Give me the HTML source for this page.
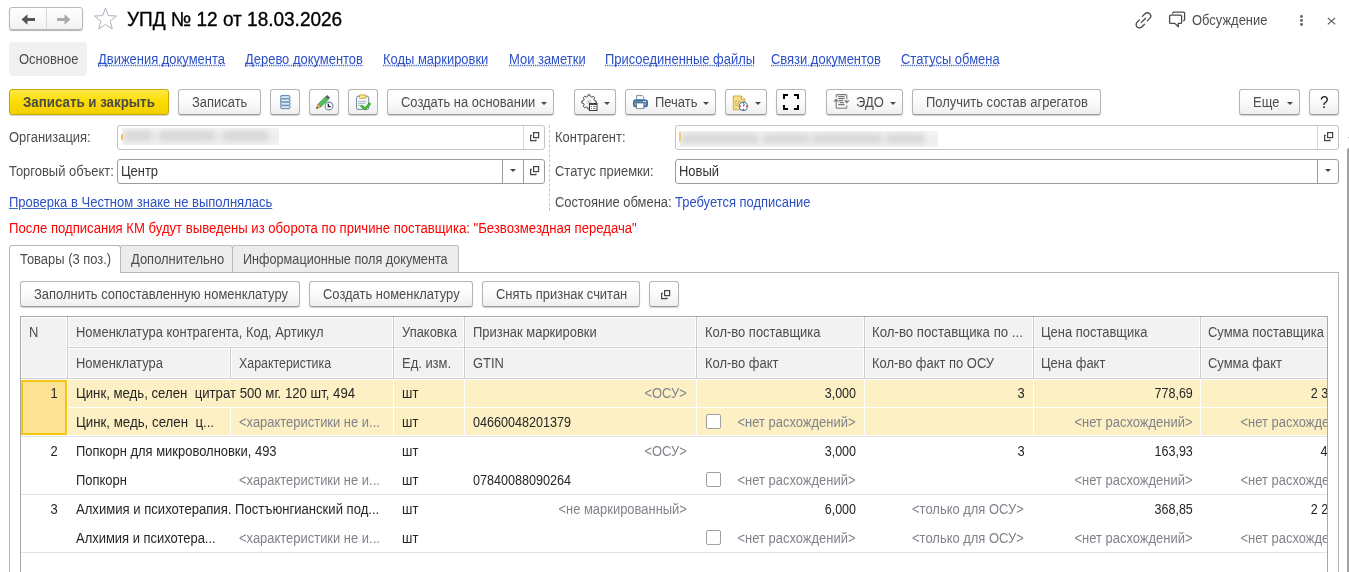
<!DOCTYPE html>
<html><head><meta charset="utf-8">
<style>
*{box-sizing:border-box;margin:0;padding:0}
html,body{width:1349px;height:572px;overflow:hidden;background:#fff}
body{position:relative;font-family:"Liberation Sans",sans-serif;font-size:13px;color:#4d4d4d}
.a{position:absolute;white-space:pre;font-size:14px;line-height:16px;transform:scaleX(.925);transform-origin:0 0}
.a.r{transform-origin:100% 0}
.btn{position:absolute;top:89px;height:26px;border:1px solid #b5b5b5;border-bottom-color:#9a9a9a;border-radius:3px;background:linear-gradient(#fff 0%,#fdfdfd 40%,#efefef 100%);box-shadow:0 1px 1px rgba(0,0,0,.18)}
.btn .t{position:absolute;top:4px;white-space:pre;font-size:14px;line-height:16px;transform:scaleX(.925);transform-origin:0 0;color:#4d4d4d}
.dd{position:absolute;width:0;height:0;border-left:3px solid transparent;border-right:3px solid transparent;border-top:3px solid #4d4d4d}
.lnk{color:#2c50c4;text-decoration:underline dotted;text-underline-offset:1px;text-decoration-skip-ink:none}
.inp{position:absolute;height:25px;border:1px solid #c4c4c4;border-radius:3px;background:#fff}
.inp.dk{border-color:#9c9c9c}
.vdiv{position:absolute;top:0;bottom:0;width:1px}
</style></head><body>

<!-- HEADER -->
<div style="position:absolute;left:9px;top:7px;width:74px;height:23px;border:1px solid #b8b8b8;border-radius:3px;background:linear-gradient(#fff,#f2f2f2);box-shadow:0 1px 1px rgba(0,0,0,.3)"></div>
<div style="position:absolute;left:46px;top:8px;width:1px;height:21px;background:#d6d6d6"></div>
<svg style="position:absolute;left:20px;top:13px" width="16" height="13" viewBox="0 0 16 13"><path d="M1.5 6.5 L7.5 1.2 V5 H15 V8 H7.5 V11.8 Z" fill="#555"/></svg>
<svg style="position:absolute;left:56px;top:13px" width="16" height="13" viewBox="0 0 16 13"><path d="M14.5 6.5 L8.5 1.2 V5 H1 V8 H8.5 V11.8 Z" fill="#aaa"/></svg>
<svg style="position:absolute;left:92px;top:7px" width="27" height="25" viewBox="0 0 27 25"><path d="M13.50 1.00 L16.38 8.64 L24.53 9.02 L18.16 14.11 L20.32 21.98 L13.50 17.50 L6.68 21.98 L8.84 14.11 L2.47 9.02 L10.62 8.64 Z" fill="none" stroke="#a9b1ba" stroke-width="1" stroke-linejoin="miter"/></svg>
<div class="a" style="left:127px;top:8px;font-size:20px;line-height:23px;color:#000;transform:scaleX(.95);-webkit-text-stroke:.35px #000">УПД № 12 от 18.03.2026</div>

<svg style="position:absolute;left:1132px;top:8px" width="58" height="24" viewBox="0 0 58 24"><g fill="none" stroke="#4a4a4a" stroke-width="1.3" stroke-linecap="round"><path d="M10.3 8.4 L13 5.7 A3.32 3.32 0 0 1 17.7 10.4 L15.2 12.9"/><path d="M12.5 16.3 L9.8 19 A3.32 3.32 0 0 1 5.1 14.3 L7.5 11.9"/><path d="M9.2 14.6 L13.6 10.2"/><path d="M37.6 8.2 Q37.6 7.2 38.6 7.2 H48.6 Q49.6 7.2 49.6 8.2 V14.4 Q49.6 15.4 48.6 15.4 H46.3 V18.8 L42.8 15.4 H38.6 Q37.6 15.4 37.6 14.4 Z" stroke-linejoin="round"/><path d="M40.6 5.3 Q41 4.2 42 4.2 H51.6 Q52.6 4.2 52.6 5.2 V11.4 Q52.6 12.4 51.6 12.6"/></g></svg>
<div class="a" style="left:1192px;top:12px;color:#4d4d4d">Обсуждение</div>
<div style="position:absolute;left:1300px;top:15.3px;width:2.8px;height:2.8px;border-radius:50%;background:#6a6a6a"></div>
<div style="position:absolute;left:1300px;top:19.3px;width:2.8px;height:2.8px;border-radius:50%;background:#6a6a6a"></div>
<div style="position:absolute;left:1300px;top:23.3px;width:2.8px;height:2.8px;border-radius:50%;background:#6a6a6a"></div>
<svg style="position:absolute;left:1327px;top:17px" width="9" height="8" viewBox="0 0 9 8"><path d="M0.8 0.8 L8.2 7.4 M8.2 0.8 L0.8 7.4" stroke="#555" stroke-width="1.1"/></svg>

<!-- NAV -->
<div style="position:absolute;left:9px;top:42px;width:78px;height:34px;border-radius:4px;background:#f0f0f0"></div>
<div class="a" style="left:19px;top:51px;color:#4d4d4d">Основное</div>
<div class="a lnk" style="left:98px;top:51px">Движения документа</div>
<div class="a lnk" style="left:245px;top:51px">Дерево документов</div>
<div class="a lnk" style="left:383px;top:51px">Коды маркировки</div>
<div class="a lnk" style="left:509px;top:51px">Мои заметки</div>
<div class="a lnk" style="left:605px;top:51px">Присоединенные файлы</div>
<div class="a lnk" style="left:771px;top:51px">Связи документов</div>
<div class="a lnk" style="left:901px;top:51px">Статусы обмена</div>

<!-- TOOLBAR -->
<div class="btn" style="left:9px;width:160px;border-color:#c7a900;background:linear-gradient(#ffea47,#fcdc00 50%,#f3d000)"><span class="t" style="left:13px;font-weight:bold;color:#4a4a4a;transform:scaleX(.95)">Записать и закрыть</span></div>
<div class="btn" style="left:178px;width:83px"><span class="t" style="left:13px">Записать</span></div>
<div class="btn" style="left:270px;width:30px"><svg style="position:absolute;left:9px;top:5px" width="11" height="15" viewBox="0 0 11 15"><g stroke="#6489ab" stroke-width="1" fill="#b9d2e6"><rect x="0.5" y="0.5" width="9.5" height="3.3" rx="1.2"/><rect x="0.5" y="3.8" width="9.5" height="3.3" rx="1.2"/><rect x="0.5" y="7.1" width="9.5" height="3.3" rx="1.2"/><rect x="0.5" y="10.4" width="9.5" height="3.3" rx="1.2"/></g><g stroke="#e6f0f8" stroke-width="1"><path d="M2 2.15H8.5M2 5.45H8.5M2 8.75H8.5M2 12.05H8.5"/></g></svg></div>
<div class="btn" style="left:309px;width:30px"><svg style="position:absolute;left:5px;top:4px" width="19" height="17" viewBox="0 0 19 17"><path d="M2 13.5 L3.2 10 L10.5 2.7 L13.3 5.5 L6 12.8 Z" fill="#4fc05a" stroke="#2f8a3a" stroke-width=".6"/><path d="M10.5 2.7 L12.3 0.9 L15.1 3.7 L13.3 5.5 Z" fill="#59606a"/><path d="M1.2 14.8 L3.2 10 L6 12.8 Z" fill="#f0c070" stroke="#a07030" stroke-width=".6"/><path d="M1.2 14.8 L2 12.8 L3.2 14 Z" fill="#5a4020"/><circle cx="14" cy="12" r="3.9" fill="#fff" stroke="#6f8ca8" stroke-width="1.1"/><path d="M13.3 9.8 V12.7 H15.8" fill="none" stroke="#222" stroke-width="1.3"/></svg></div>
<div class="btn" style="left:348px;width:30px"><svg style="position:absolute;left:6px;top:4px" width="17" height="17" viewBox="0 0 17 17"><rect x="1.5" y="2.2" width="12.2" height="13.2" rx="1.5" fill="#f3f8fc" stroke="#74889c" stroke-width="1"/><rect x="4.3" y="1" width="6.6" height="3.2" rx="1" fill="#fff28a" stroke="#c18d2c" stroke-width=".9"/><path d="M3.2 7.4H11.3M3.2 9.4H10.5M3.2 11.3H5" stroke="#8ea3b8" stroke-width=".8"/><path d="M6.6 12.1 L10.1 15 L14.6 9.9" fill="none" stroke="#2f9e2f" stroke-width="2.6" stroke-linecap="round" stroke-linejoin="round"/><path d="M6.6 12.1 L10.1 15 L14.6 9.9" fill="none" stroke="#4fc83a" stroke-width="1.1" stroke-linecap="round" stroke-linejoin="round"/></svg></div>
<div class="btn" style="left:387px;width:167px"><span class="t" style="left:13px">Создать на основании</span><div class="dd" style="left:153px;top:12px"></div></div>
<div class="btn" style="left:574px;width:42px"><svg style="position:absolute;left:6px;top:4px" width="18" height="18" viewBox="0 0 18 18"><path d="M13.44 6.66 L15.11 6.90 L15.11 9.10 L13.44 9.34 L12.79 10.90 L13.81 12.25 L12.25 13.81 L10.90 12.79 L9.34 13.44 L9.10 15.11 L6.90 15.11 L6.66 13.44 L5.10 12.79 L3.75 13.81 L2.19 12.25 L3.21 10.90 L2.56 9.34 L0.89 9.10 L0.89 6.90 L2.56 6.66 L3.21 5.10 L2.19 3.75 L3.75 2.19 L5.10 3.21 L6.66 2.56 L6.90 0.89 L9.10 0.89 L9.34 2.56 L10.90 3.21 L12.25 2.19 L13.81 3.75 L12.79 5.10 Z" fill="#fff" stroke="#4a4a4a" stroke-width="1"/><path d="M6 6 L10 10 M10 6 L6 10 M8 5 V11 M5 8 H11" stroke="#bbb" stroke-width=".8"/><rect x="8.5" y="9.5" width="7.5" height="7" fill="#fff" stroke="#3a3a3a" stroke-width="1"/><path d="M8.5 10.2H16" stroke="#3a3a3a" stroke-width="1.4"/><path d="M10 12.5H11M12 12.5H14.6M10 14.5H11M12 14.5H14.6" stroke="#555" stroke-width=".8"/></svg><div class="dd" style="left:29px;top:12px"></div></div>
<div class="btn" style="left:625px;width:91px"><svg style="position:absolute;left:7px;top:5px" width="16" height="16" viewBox="0 0 16 16"><path d="M3.6 0.6 H9.2 L10.8 2.2 V5 H3.6 Z" fill="#fff" stroke="#6f7f90" stroke-width=".9"/><rect x="0.7" y="5.2" width="13.6" height="6.4" rx="1.6" fill="#729bc6" stroke="#2d5b8c" stroke-width="1.2"/><path d="M2.3 7.2 H12.7" stroke="#2d5b8c" stroke-width="1"/><circle cx="10.6" cy="6.4" r=".65" fill="#fff"/><circle cx="12.4" cy="6.4" r=".65" fill="#fff"/><rect x="3.6" y="8" width="7.2" height="5.6" fill="#fff" stroke="#6f7f90" stroke-width=".9"/></svg><span class="t" style="left:29px">Печать</span><div class="dd" style="left:77px;top:12px"></div></div>
<div class="btn" style="left:725px;width:42px"><svg style="position:absolute;left:6px;top:4.5px" width="17" height="16" viewBox="0 0 17 16"><path d="M1.3 1 H9.5 L12.8 4.3 V14.7 H1.3 Z" fill="#f5df8e" stroke="#d3a741" stroke-width="1" stroke-linejoin="round"/><path d="M9.5 1 V4.3 H12.8" fill="#fff" stroke="#d3a741" stroke-width="1"/><path d="M3 6.2H5M6 6.2H8.5M3 8.2H4M5 8.2H7M3 10.2H6" stroke="#c9a24a" stroke-width=".9"/><circle cx="11.4" cy="11.3" r="4.2" fill="#fff" stroke="#5386b8" stroke-width="1.1"/><path d="M11.4 11.3 L12.6 9" stroke="#7da4d0" stroke-width="1.6"/><path d="M11.4 11.3 V9.5" stroke="#3b6ea5" stroke-width=".7"/><circle cx="11.4" cy="8.1" r=".7" fill="#e01010"/><circle cx="11.4" cy="14.5" r=".7" fill="#e01010"/><circle cx="8.2" cy="11.3" r=".7" fill="#e01010"/><circle cx="14.6" cy="11.3" r=".7" fill="#e01010"/></svg><div class="dd" style="left:29px;top:12px"></div></div>
<div class="btn" style="left:776px;width:30px"><svg style="position:absolute;left:6px;top:4px" width="17" height="17" viewBox="0 0 17 17"><path d="M1 5 V1 H5 M11 1 H15 V5 M15 11 V15 H11 M5 15 H1 V11" fill="none" stroke="#000" stroke-width="2"/></svg></div>
<div class="btn" style="left:826px;width:77px"><svg style="position:absolute;left:6px;top:4.3px" width="17" height="15" viewBox="0 0 17 15"><g fill="none" stroke="#7a7a7a" stroke-width="1.1"><path d="M3.2 3.4 V1.6 Q3.2 0.6 4.2 0.6 H12.8 Q13.8 0.6 13.8 1.6 V5.2"/><path d="M3.2 6.5 V13.2 Q3.2 14.2 4.2 14.2 H12.8 Q13.8 14.2 13.8 13.2 V11.6"/><path d="M5.2 2.6H11.6M5.2 4.6H11.6M6 6.6H10M6.6 8.6H11M5.2 10.6H11.6"/></g><path d="M0.2 7.6 L3.2 4.4 L6.2 7.6 Z" fill="#7a7a7a"/><path d="M10.8 6.4 L13.8 9.6 L16.8 6.4 Z" fill="#7a7a7a"/></svg><span class="t" style="left:29px">ЭДО</span><div class="dd" style="left:63px;top:12px"></div></div>
<div class="btn" style="left:912px;width:189px"><span class="t" style="left:13px">Получить состав агрегатов</span></div>
<div class="btn" style="left:1239px;width:61px"><span class="t" style="left:13px">Еще</span><div class="dd" style="left:47px;top:12px"></div></div>
<div class="btn" style="left:1309px;width:30px"><span class="t" style="left:10px;top:4px;font-size:17px;line-height:17px;color:#1a1a1a;transform:scaleX(.9)">?</span></div>

<!-- FORM -->
<div class="a" style="left:9px;top:129px">Организация:</div>
<div class="inp" style="left:117px;top:125px;width:428px"><div style="position:absolute;left:4px;top:2px;width:157px;height:17px;background:linear-gradient(#f5f5f5,#eeeeee 50%,#f2f2f2);overflow:hidden"><div style="position:absolute;left:2px;top:3px;width:28px;height:10px;background:#d6d6d6;filter:blur(3px)"></div><div style="position:absolute;left:37px;top:3px;width:56px;height:10px;background:#d6d6d6;filter:blur(3px)"></div><div style="position:absolute;left:100px;top:3px;width:46px;height:10px;background:#d6d6d6;filter:blur(3px)"></div></div><div style="position:absolute;left:3px;top:8px;width:2px;height:6px;background:#f5b85a;border-radius:1px;filter:blur(.5px)"></div><div class="vdiv" style="left:405px;background:#d4d4d4"></div><svg style="position:absolute;left:411px;top:5px" width="11" height="11" viewBox="0 0 11 11"><rect x="4.6" y="1.6" width="5" height="5" fill="none" stroke="#444" stroke-width="1.2"/><path d="M2.8 4.3 H1.6 V9.6 H6.9 V8.4" fill="none" stroke="#444" stroke-width="1.2"/></svg></div>
<div style="position:absolute;left:549px;top:125px;height:86px;border-left:1px dashed #c8c8c8"></div>
<div class="a" style="left:555px;top:129px">Контрагент:</div>
<div class="inp" style="left:675px;top:125px;width:664px"><div style="position:absolute;left:4px;top:5px;width:258px;height:16px;background:linear-gradient(#f5f5f5,#eeeeee 50%,#f2f2f2);overflow:hidden"><div style="position:absolute;left:2px;top:3px;width:76px;height:9px;background:#d6d6d6;filter:blur(3px)"></div><div style="position:absolute;left:83px;top:3px;width:46px;height:9px;background:#d6d6d6;filter:blur(3px)"></div><div style="position:absolute;left:132px;top:3px;width:70px;height:9px;background:#d6d6d6;filter:blur(3px)"></div><div style="position:absolute;left:206px;top:3px;width:38px;height:9px;background:#d6d6d6;filter:blur(3px)"></div></div><div style="position:absolute;left:3px;top:6px;width:2px;height:10px;background:#f7cd7a;filter:blur(.4px)"></div><div class="vdiv" style="left:641px;background:#d4d4d4"></div><svg style="position:absolute;left:647px;top:5px" width="11" height="11" viewBox="0 0 11 11"><rect x="4.6" y="1.6" width="5" height="5" fill="none" stroke="#444" stroke-width="1.2"/><path d="M2.8 4.3 H1.6 V9.6 H6.9 V8.4" fill="none" stroke="#444" stroke-width="1.2"/></svg></div>

<div class="a" style="left:9px;top:163px">Торговый объект:</div>
<div class="inp dk" style="left:117px;top:159px;width:428px"><div class="a" style="left:3px;top:3px;color:#333">Центр</div><div class="vdiv" style="left:384px;background:#9c9c9c"></div><div style="position:absolute;left:392px;top:9px;width:0;height:0;border-left:3px solid transparent;border-right:3px solid transparent;border-top:3px solid #444"></div><div class="vdiv" style="left:405px;background:#9c9c9c"></div><svg style="position:absolute;left:411px;top:5px" width="11" height="11" viewBox="0 0 11 11"><rect x="4.6" y="1.6" width="5" height="5" fill="none" stroke="#444" stroke-width="1.2"/><path d="M2.8 4.3 H1.6 V9.6 H6.9 V8.4" fill="none" stroke="#444" stroke-width="1.2"/></svg></div>
<div class="a" style="left:555px;top:163px">Статус приемки:</div>
<div class="inp dk" style="left:675px;top:159px;width:664px"><div class="a" style="left:3px;top:3px;color:#333">Новый</div><div class="vdiv" style="left:641px;background:#9c9c9c"></div><div style="position:absolute;left:649px;top:9px;width:0;height:0;border-left:3px solid transparent;border-right:3px solid transparent;border-top:3px solid #444"></div></div>

<div class="a" style="left:9px;top:194px;color:#2c50c4;text-decoration:underline;text-decoration-color:#3f6cc8;transform:scaleX(.93)">Проверка в Честном знаке не выполнялась</div>
<div class="a" style="left:555px;top:194px">Состояние обмена:</div>
<div class="a" style="left:675px;top:194px;color:#2c50c4">Требуется подписание</div>
<div class="a" style="left:9px;top:220px;color:#f00;transform:scaleX(.9375)">После подписания КМ будут выведены из оборота по причине поставщика: "Безвозмездная передача"</div>

<!-- TABS -->
<div id="tabs"></div>
<div style="position:absolute;left:9px;top:272px;width:1330px;height:310px;border:1px solid #b5b5b5;border-bottom:none"></div>
<div style="position:absolute;left:9px;top:245px;width:112px;height:28px;border:1px solid #b5b5b5;border-bottom:none;border-radius:3px 3px 0 0;background:#fff"></div>
<div style="position:absolute;left:120px;top:245px;width:113px;height:27px;border:1px solid #bdbdbd;border-bottom:none;border-radius:3px 3px 0 0;background:#ececec"></div>
<div style="position:absolute;left:232px;top:245px;width:227px;height:27px;border:1px solid #bdbdbd;border-bottom:none;border-radius:3px 3px 0 0;background:#ececec"></div>
<div class="a" style="left:20px;top:251px">Товары (3 поз.)</div>
<div class="a" style="left:131px;top:251px">Дополнительно</div>
<div class="a" style="left:243px;top:251px;transform:scaleX(.905)">Информационные поля документа</div>
<div class="btn" style="left:20px;top:281px;width:280px"><span class="t" style="left:13px">Заполнить сопоставленную номенклатуру</span></div>
<div class="btn" style="left:309px;top:281px;width:164px"><span class="t" style="left:13px">Создать номенклатуру</span></div>
<div class="btn" style="left:482px;top:281px;width:158px"><span class="t" style="left:13px">Снять признак считан</span></div>
<div class="btn" style="left:649px;top:281px;width:30px"><svg style="position:absolute;left:10px;top:7px" width="11" height="11" viewBox="0 0 11 11"><rect x="4.6" y="1.6" width="5" height="5" fill="none" stroke="#444" stroke-width="1.2"/><path d="M2.8 4.3 H1.6 V9.6 H6.9 V8.4" fill="none" stroke="#444" stroke-width="1.2"/></svg></div>
<div style="position:absolute;left:20px;top:316px;width:1308px;height:260px;border:1px solid #a8a8a8;border-bottom:none;overflow:hidden;background:#fff">
<div style="position:absolute;left:0px;top:0px;width:1347px;height:62px;background:#cdcdcd"></div>
<div style="position:absolute;left:0px;top:0px;width:46px;height:61px;background:#f2f2f2;border:1px solid #fff"></div>
<div style="position:absolute;left:47px;top:0px;width:325px;height:30px;background:#f2f2f2;border:1px solid #fff"></div>
<div style="position:absolute;left:47px;top:31px;width:162px;height:30px;background:#f2f2f2;border:1px solid #fff"></div>
<div style="position:absolute;left:210px;top:31px;width:162px;height:30px;background:#f2f2f2;border:1px solid #fff"></div>
<div style="position:absolute;left:373px;top:0px;width:70px;height:30px;background:#f2f2f2;border:1px solid #fff"></div>
<div style="position:absolute;left:373px;top:31px;width:70px;height:30px;background:#f2f2f2;border:1px solid #fff"></div>
<div style="position:absolute;left:444px;top:0px;width:231px;height:30px;background:#f2f2f2;border:1px solid #fff"></div>
<div style="position:absolute;left:444px;top:31px;width:231px;height:30px;background:#f2f2f2;border:1px solid #fff"></div>
<div style="position:absolute;left:676px;top:0px;width:167px;height:30px;background:#f2f2f2;border:1px solid #fff"></div>
<div style="position:absolute;left:676px;top:31px;width:167px;height:30px;background:#f2f2f2;border:1px solid #fff"></div>
<div style="position:absolute;left:844px;top:0px;width:168px;height:30px;background:#f2f2f2;border:1px solid #fff"></div>
<div style="position:absolute;left:844px;top:31px;width:168px;height:30px;background:#f2f2f2;border:1px solid #fff"></div>
<div style="position:absolute;left:1013px;top:0px;width:166px;height:30px;background:#f2f2f2;border:1px solid #fff"></div>
<div style="position:absolute;left:1013px;top:31px;width:166px;height:30px;background:#f2f2f2;border:1px solid #fff"></div>
<div style="position:absolute;left:1180px;top:0px;width:166px;height:30px;background:#f2f2f2;border:1px solid #fff"></div>
<div style="position:absolute;left:1180px;top:31px;width:166px;height:30px;background:#f2f2f2;border:1px solid #fff"></div>
<div class="a" style="left:8px;top:7px;">N</div>
<div class="a" style="left:55px;top:7px;">Номенклатура контрагента, Код, Артикул</div>
<div class="a" style="left:55px;top:38px;">Номенклатура</div>
<div class="a" style="left:218px;top:38px;transform:scaleX(.885)">Характеристика</div>
<div class="a" style="left:381px;top:7px;">Упаковка</div>
<div class="a" style="left:381px;top:38px;">Ед. изм.</div>
<div class="a" style="left:452px;top:7px;">Признак маркировки</div>
<div class="a" style="left:452px;top:38px;">GTIN</div>
<div class="a" style="left:684px;top:7px;">Кол-во поставщика</div>
<div class="a" style="left:684px;top:38px;">Кол-во факт</div>
<div class="a" style="left:851px;top:7px;transform:scaleX(.945)">Кол-во поставщика по ...</div>
<div class="a" style="left:851px;top:38px;">Кол-во факт по ОСУ</div>
<div class="a" style="left:1020px;top:7px;">Цена поставщика</div>
<div class="a" style="left:1020px;top:38px;">Цена факт</div>
<div class="a" style="left:1187px;top:7px;">Сумма поставщика</div>
<div class="a" style="left:1187px;top:38px;">Сумма факт</div>
<div style="position:absolute;left:0px;top:62px;width:1347px;height:57px;background:#fff"></div>
<div style="position:absolute;left:0px;top:63px;width:46px;height:55px;background:#fde293;border:2px solid #f6c416"></div>
<div style="position:absolute;left:47px;top:63px;width:325px;height:27px;background:#fdf0c4"></div>
<div style="position:absolute;left:47px;top:91px;width:162px;height:27px;background:#fdf0c4"></div>
<div style="position:absolute;left:210px;top:91px;width:162px;height:27px;background:#fdf0c4"></div>
<div style="position:absolute;left:373px;top:63px;width:70px;height:27px;background:#fdf0c4"></div>
<div style="position:absolute;left:373px;top:91px;width:70px;height:27px;background:#fdf0c4"></div>
<div style="position:absolute;left:444px;top:63px;width:231px;height:27px;background:#fdf0c4"></div>
<div style="position:absolute;left:444px;top:91px;width:231px;height:27px;background:#fdf0c4"></div>
<div style="position:absolute;left:676px;top:63px;width:167px;height:27px;background:#fdf0c4"></div>
<div style="position:absolute;left:676px;top:91px;width:167px;height:27px;background:#fdf0c4"></div>
<div style="position:absolute;left:844px;top:63px;width:168px;height:27px;background:#fdf0c4"></div>
<div style="position:absolute;left:844px;top:91px;width:168px;height:27px;background:#fdf0c4"></div>
<div style="position:absolute;left:1013px;top:63px;width:166px;height:27px;background:#fdf0c4"></div>
<div style="position:absolute;left:1013px;top:91px;width:166px;height:27px;background:#fdf0c4"></div>
<div style="position:absolute;left:1180px;top:63px;width:166px;height:27px;background:#fdf0c4"></div>
<div style="position:absolute;left:1180px;top:91px;width:166px;height:27px;background:#fdf0c4"></div>
<div style="position:absolute;left:0px;top:119px;width:1347px;height:1px;background:#e3e3e3"></div>
<div style="position:absolute;left:0px;top:177px;width:1347px;height:1px;background:#e3e3e3"></div>
<div style="position:absolute;left:0px;top:235px;width:1347px;height:1px;background:#e3e3e3"></div>
<div class="a r" style="right:1269px;top:68px;color:#262626">1</div>
<div class="a" style="left:55px;top:68px;color:#262626;transform:scaleX(.942)">Цинк, медь, селен  цитрат 500 мг. 120 шт, 494</div>
<div class="a" style="left:55px;top:97px;color:#262626;transform:scaleX(.948)">Цинк, медь, селен  ц...</div>
<div class="a" style="left:218px;top:97px;color:#80838a">&lt;характеристики не и...</div>
<div class="a" style="left:381px;top:68px;color:#262626">шт</div>
<div class="a" style="left:381px;top:97px;color:#262626">шт</div>
<div class="a r" style="right:640px;top:68px;color:#80838a">&lt;ОСУ&gt;</div>
<div class="a" style="left:452px;top:97px;color:#262626;transform:scaleX(.9)">04660048201379</div>
<div class="a r" style="right:471px;top:68px;color:#262626;transform:scaleX(.895)">3,000</div>
<div style="position:absolute;left:685px;top:97px;width:15px;height:15px;background:#fff;border:1px solid #a0a0a0;border-radius:2px"></div>
<div class="a r" style="right:472px;top:97px;color:#80838a">&lt;нет расхождений&gt;</div>
<div class="a r" style="right:302px;top:68px;color:#262626">3</div>
<div class="a r" style="right:134px;top:68px;color:#262626;transform:scaleX(.895)">778,69</div>
<div class="a r" style="right:135px;top:97px;color:#80838a">&lt;нет расхождений&gt;</div>
<div class="a r" style="right:-32px;top:68px;color:#262626;transform:scaleX(.895)">2 336,07</div>
<div class="a r" style="right:-31px;top:97px;color:#80838a">&lt;нет расхождений&gt;</div>
<div class="a r" style="right:1269px;top:126px;color:#262626">2</div>
<div class="a" style="left:55px;top:126px;color:#262626;transform:scaleX(.925)">Попкорн для микроволновки, 493</div>
<div class="a" style="left:55px;top:155px;color:#262626;transform:scaleX(.925)">Попкорн</div>
<div class="a" style="left:218px;top:155px;color:#80838a">&lt;характеристики не и...</div>
<div class="a" style="left:381px;top:126px;color:#262626">шт</div>
<div class="a" style="left:381px;top:155px;color:#262626">шт</div>
<div class="a r" style="right:640px;top:126px;color:#80838a">&lt;ОСУ&gt;</div>
<div class="a" style="left:452px;top:155px;color:#262626;transform:scaleX(.9)">07840088090264</div>
<div class="a r" style="right:471px;top:126px;color:#262626;transform:scaleX(.895)">3,000</div>
<div style="position:absolute;left:685px;top:155px;width:15px;height:15px;background:#fff;border:1px solid #a0a0a0;border-radius:2px"></div>
<div class="a r" style="right:472px;top:155px;color:#80838a">&lt;нет расхождений&gt;</div>
<div class="a r" style="right:302px;top:126px;color:#262626">3</div>
<div class="a r" style="right:134px;top:126px;color:#262626;transform:scaleX(.895)">163,93</div>
<div class="a r" style="right:135px;top:155px;color:#80838a">&lt;нет расхождений&gt;</div>
<div class="a r" style="right:-32px;top:126px;color:#262626;transform:scaleX(.895)">491,79</div>
<div class="a r" style="right:-31px;top:155px;color:#80838a">&lt;нет расхождений&gt;</div>
<div class="a r" style="right:1269px;top:184px;color:#262626">3</div>
<div class="a" style="left:55px;top:184px;color:#262626;transform:scaleX(.935)">Алхимия и психотерапия. Постъюнгианский под...</div>
<div class="a" style="left:55px;top:213px;color:#262626;transform:scaleX(.925)">Алхимия и психотера...</div>
<div class="a" style="left:218px;top:213px;color:#80838a">&lt;характеристики не и...</div>
<div class="a" style="left:381px;top:184px;color:#262626">шт</div>
<div class="a" style="left:381px;top:213px;color:#262626">шт</div>
<div class="a r" style="right:640px;top:184px;color:#80838a">&lt;не маркированный&gt;</div>
<div class="a r" style="right:471px;top:184px;color:#262626;transform:scaleX(.895)">6,000</div>
<div style="position:absolute;left:685px;top:213px;width:15px;height:15px;background:#fff;border:1px solid #a0a0a0;border-radius:2px"></div>
<div class="a r" style="right:472px;top:213px;color:#80838a">&lt;нет расхождений&gt;</div>
<div class="a r" style="right:303px;top:184px;color:#80838a">&lt;только для ОСУ&gt;</div>
<div class="a r" style="right:303px;top:213px;color:#80838a">&lt;только для ОСУ&gt;</div>
<div class="a r" style="right:134px;top:184px;color:#262626;transform:scaleX(.895)">368,85</div>
<div class="a r" style="right:135px;top:213px;color:#80838a">&lt;нет расхождений&gt;</div>
<div class="a r" style="right:-32px;top:184px;color:#262626;transform:scaleX(.895)">2 213,10</div>
<div class="a r" style="right:-31px;top:213px;color:#80838a">&lt;нет расхождений&gt;</div>
</div>
<div style="position:absolute;left:1347px;top:148px;width:3px;height:430px;background:#a2a2a2;border-radius:2px 0 0 0"></div><div style="position:absolute;left:1348px;top:137px;width:1px;height:1px;background:#bbb"></div>

</body></html>
